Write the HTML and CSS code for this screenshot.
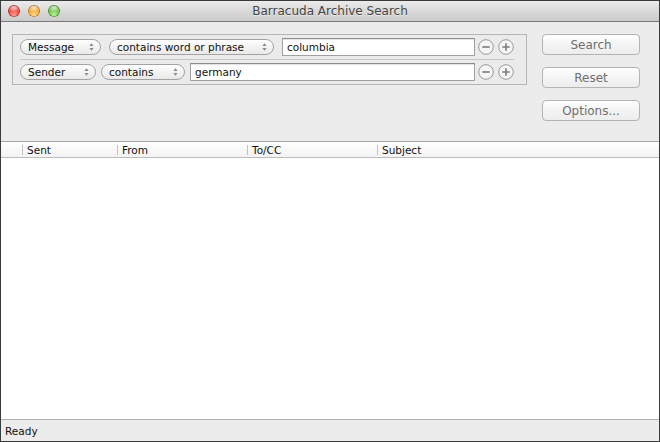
FILE: index.html
```html
<!DOCTYPE html>
<html>
<head>
<meta charset="utf-8">
<title>Barracuda Archive Search</title>
<link rel="stylesheet" href="styles.css">
</head>
<body>
<div class="window">
  <header class="titlebar">
    <div class="lights">
      <span class="light red"></span>
      <span class="light yellow"></span>
      <span class="light green"></span>
    </div>
    <div class="title">Barracuda Archive Search</div>
    <div></div>
  </header>

  <section class="top">
    <div class="criteria">
      <div class="row row-1">
        <div class="popup w-message"><span>Message</span>
          <svg class="updown" width="5" height="8" viewBox="0 0 5 8"><path d="M2.5 0.3 L4.6 3 L0.4 3Z M0.4 5 L4.6 5 L2.5 7.7Z"/></svg>
        </div>
        <div class="popup w-phrase"><span>contains word or phrase</span>
          <svg class="updown" width="5" height="8" viewBox="0 0 5 8"><path d="M2.5 0.3 L4.6 3 L0.4 3Z M0.4 5 L4.6 5 L2.5 7.7Z"/></svg>
        </div>
        <div class="field">columbia</div>
        <div class="pm">
          <svg class="roundbtn" width="16" height="16" viewBox="0 0 16 16"><circle cx="8" cy="8" r="7.3"/><path d="M4.3 8 H11.7"/></svg>
          <svg class="roundbtn" width="16" height="16" viewBox="0 0 16 16"><circle cx="8" cy="8" r="7.3"/><path d="M4.3 8 H11.7 M8 4.3 V11.7"/></svg>
        </div>
      </div>
      <div class="row row-2">
        <div class="popup w-sender"><span>Sender</span>
          <svg class="updown" width="5" height="8" viewBox="0 0 5 8"><path d="M2.5 0.3 L4.6 3 L0.4 3Z M0.4 5 L4.6 5 L2.5 7.7Z"/></svg>
        </div>
        <div class="popup w-contains"><span>contains</span>
          <svg class="updown" width="5" height="8" viewBox="0 0 5 8"><path d="M2.5 0.3 L4.6 3 L0.4 3Z M0.4 5 L4.6 5 L2.5 7.7Z"/></svg>
        </div>
        <div class="field">germany</div>
        <div class="pm">
          <svg class="roundbtn" width="16" height="16" viewBox="0 0 16 16"><circle cx="8" cy="8" r="7.3"/><path d="M4.3 8 H11.7"/></svg>
          <svg class="roundbtn" width="16" height="16" viewBox="0 0 16 16"><circle cx="8" cy="8" r="7.3"/><path d="M4.3 8 H11.7 M8 4.3 V11.7"/></svg>
        </div>
      </div>
    </div>
    <div class="actions">
      <button class="btn">Search</button>
      <button class="btn">Reset</button>
      <button class="btn">Options...</button>
    </div>
  </section>

  <section class="table">
    <div class="thead">
      <div class="th th-check"></div>
      <div class="th th-sent">Sent</div>
      <div class="th th-from">From</div>
      <div class="th th-to">To/CC</div>
      <div class="th th-subject">Subject</div>
    </div>
    <div class="tbody"></div>
  </section>

  <footer class="status">Ready</footer>
</div>
</body>
</html>
```

FILE: styles.css
```css
* { box-sizing: border-box; }

html, body {
  margin: 0;
  padding: 0;
  background: #ececec;
}

body {
  font-family: "DejaVu Sans", "Liberation Sans", sans-serif;
  font-size: 10.5px;
  color: #111;
}

.window {
  width: 660px;
  height: 442px;
  border: 1px solid #3b3b3b;
  display: flex;
  flex-direction: column;
  background: #ececec;
  overflow: hidden;
}

/* Title bar */
.titlebar {
  height: 21px;
  flex: none;
  display: grid;
  grid-template-columns: 1fr auto 1fr;
  align-items: center;
  background: linear-gradient(#ebebeb, #d6d6d6 60%, #cbcbcb);
  border-bottom: 1px solid #7a7a7a;
}

.lights {
  display: flex;
  gap: 8px;
  padding-left: 7px;
  align-items: center;
}

.light {
  width: 12px;
  height: 12px;
  border-radius: 50%;
  display: block;
}

.light.red {
  background:
    radial-gradient(ellipse 60% 35% at 50% 22%, rgba(255,255,255,0.75), rgba(255,255,255,0) 100%),
    radial-gradient(circle at 50% 80%, #ff9b92 0%, #e9473e 50%, #b8281f 100%);
  box-shadow: inset 0 0 0 0.6px #9a2a22;
}

.light.yellow {
  background:
    radial-gradient(ellipse 60% 35% at 50% 22%, rgba(255,255,255,0.75), rgba(255,255,255,0) 100%),
    radial-gradient(circle at 50% 80%, #ffd98a 0%, #f1a633 50%, #c07a14 100%);
  box-shadow: inset 0 0 0 0.6px #a06a1a;
}

.light.green {
  background:
    radial-gradient(ellipse 60% 35% at 50% 22%, rgba(255,255,255,0.75), rgba(255,255,255,0) 100%),
    radial-gradient(circle at 50% 80%, #b9f09a 0%, #6fbf4a 50%, #3e8a26 100%);
  box-shadow: inset 0 0 0 0.6px #3c7a26;
}

.title {
  font-size: 12px;
  color: #444;
  white-space: nowrap;
  text-shadow: 0 1px 0 rgba(255,255,255,0.5);
}

/* Top search area */
.top {
  height: 119px;
  flex: none;
  display: flex;
  align-items: flex-start;
  padding: 12px 19px 0 11px;
}

.criteria {
  flex: 1;
  border: 1px solid #b5b5b5;
  background: #ebebeb;
  padding: 0 12px 0 7px;
}

.row {
  height: 24px;
  display: flex;
  align-items: center;
}

.row-2 {
  height: 25px;
  border-top: 1px solid #c6c6c6;
}

.popup {
  height: 16px;
  border: 1px solid #a3a3a3;
  border-radius: 8px;
  background: linear-gradient(#ffffff, #f3f3f3 50%, #e9e9e9);
  display: flex;
  align-items: center;
  justify-content: space-between;
  padding: 0 6px 0 7px;
  margin-right: 5px;
  flex: none;
  white-space: nowrap;
  color: #111;
}

.row-1 .popup { margin-right: 8px; }

.w-message { width: 81px; }
.w-phrase { width: 165px; }
.w-sender { width: 76px; }
.w-contains { width: 84px; }

.updown { fill: #8a8a8a; display: block; }

.field {
  flex: 1;
  height: 18px;
  border: 1px solid #a0a0a0;
  border-top-color: #8c8c8c;
  background: #fff;
  padding-left: 4px;
  display: flex;
  align-items: center;
  color: #111;
  box-shadow: inset 0 1px 0 #e4e4e4;
}

.pm {
  display: flex;
  gap: 4px;
  margin-left: 3px;
}

.roundbtn { display: block; }
.roundbtn circle {
  fill: #f5f5f5;
  stroke: #9a9a9a;
  stroke-width: 1;
}
.roundbtn path {
  stroke: #7c7c7c;
  stroke-width: 1.6;
  fill: none;
}

.actions {
  width: 98px;
  margin-left: 15px;
  display: flex;
  flex-direction: column;
  gap: 12px;
}

.btn {
  height: 21px;
  width: 100%;
  border: 1px solid #b4b4b4;
  border-radius: 4px;
  background: linear-gradient(#ffffff, #f4f4f4 50%, #ededed);
  font-family: "DejaVu Sans", "Liberation Sans", sans-serif;
  font-size: 12px;
  color: #6e6e6e;
  padding: 0;
  margin: 0;
}

/* Table */
.table {
  flex: 1;
  display: flex;
  flex-direction: column;
  min-height: 0;
}

.thead {
  height: 17px;
  flex: none;
  display: flex;
  background: linear-gradient(#ffffff, #f3f3f3);
  border-top: 1px solid #a6a6a6;
  border-bottom: 1px solid #bcbcbc;
}

.th {
  display: flex;
  align-items: center;
  white-space: nowrap;
  color: #111;
}

.th::before {
  content: "";
  width: 1px;
  height: 10px;
  background: #c2c2c2;
  margin-right: 4px;
}

.th-check { width: 21px; }
.th-check::before { display: none; }
.th-sent { width: 95px; }
.th-from { width: 130px; }
.th-to { width: 130px; }
.th-subject { flex: 1; }

.tbody {
  flex: 1;
  background: #ffffff;
}

.status {
  height: 22px;
  flex: none;
  border-top: 1px solid #b0b0b0;
  background: #ececec;
  padding-left: 4px;
  display: flex;
  align-items: center;
}
```
